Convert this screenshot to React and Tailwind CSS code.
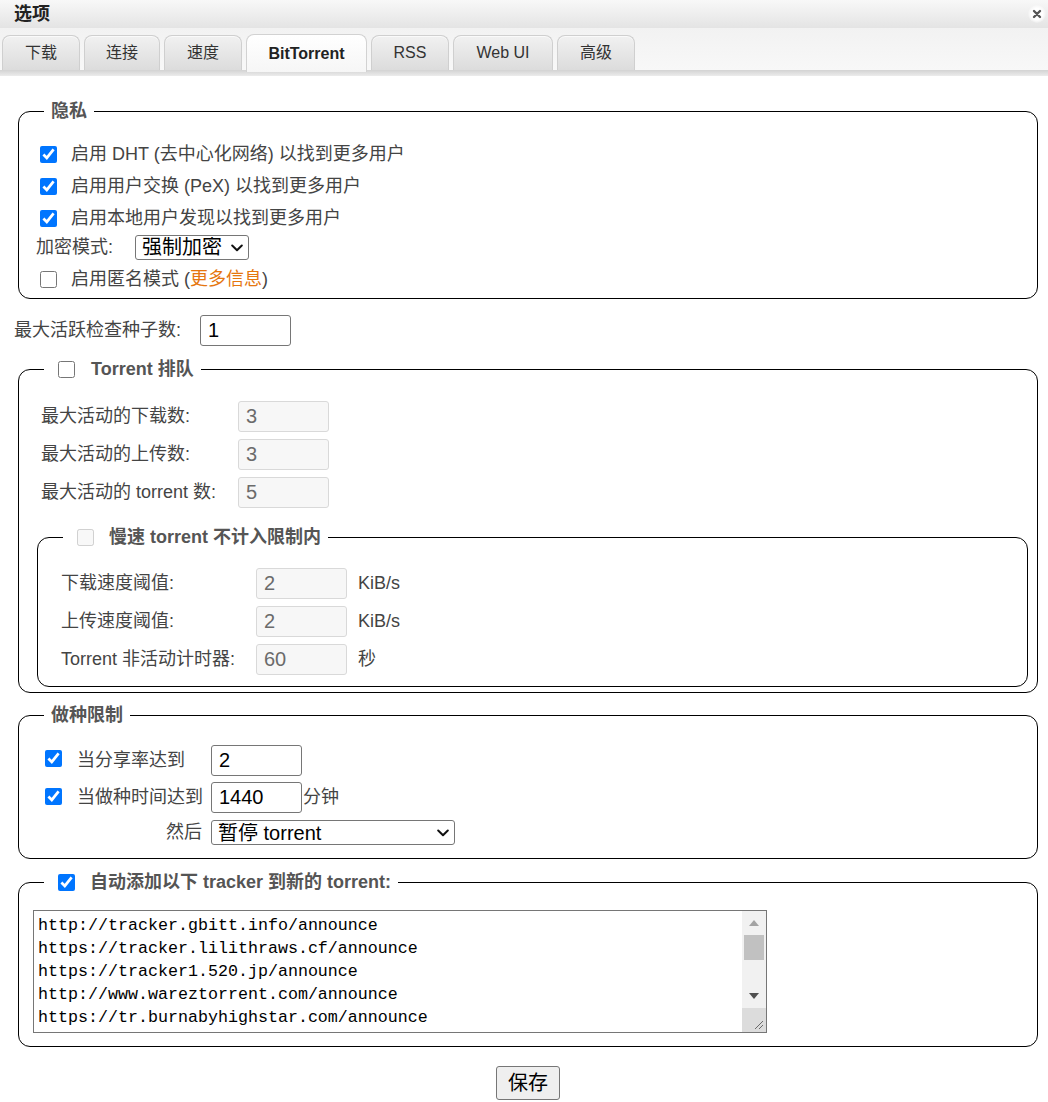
import React from "react";

function Check({ checked = false, disabled = false, className = "" }) {
  return (
    <input
      type="checkbox"
      defaultChecked={checked}
      disabled={disabled}
      className={"w-[17px] h-[17px] m-0 shrink-0 " + className}
    />
  );
}

function NumInput({ value, disabled = false, className = "" }) {
  const look = disabled
    ? "border border-[#d9d9d9] bg-[#f7f7f7] text-[#6b6b6b]"
    : "border border-[#767676] bg-white text-black";
  return (
    <input
      type="text"
      defaultValue={value}
      disabled={disabled}
      className={"h-[31px] w-[91px] rounded-[3px] pl-[7px] text-[20px] outline-none " + look + " " + className}
    />
  );
}

function Chevron() {
  return (
    <svg width="12" height="8" viewBox="0 0 12 8" className="pointer-events-none absolute right-[6px] top-[9px]">
      <path d="M1.2 1.5 L6 6.2 L10.8 1.5" fill="none" stroke="#111" strokeWidth="2" strokeLinecap="round" strokeLinejoin="round" />
    </svg>
  );
}

function Select({ value, className = "" }) {
  return (
    <span className={"relative inline-block h-[25px] " + className}>
      <select className="h-[25px] w-full appearance-none rounded-[3px] border border-[#767676] bg-white pl-[6px] text-[20px] leading-[20px] text-black outline-none">
        <option>{value}</option>
      </select>
      <Chevron />
    </span>
  );
}

function Legend({ children }) {
  return (
    <legend className="ml-[11px] px-[7px]">
      <span className="flex h-[24px] items-center text-[18px] font-bold text-[#555]">{children}</span>
    </legend>
  );
}

const TRACKERS = [
  "http://tracker.gbitt.info/announce",
  "https://tracker.lilithraws.cf/announce",
  "https://tracker1.520.jp/announce",
  "http://www.wareztorrent.com/announce",
  "https://tr.burnabyhighstar.com/announce",
];

const TABS = [
  { label: "下载", w: "w-[78px]" },
  { label: "连接", w: "w-[76px]" },
  { label: "速度", w: "w-[78px]" },
  { label: "BitTorrent", w: "w-[121px]", active: true },
  { label: "RSS", w: "w-[78px]" },
  { label: "Web UI", w: "w-[100px]" },
  { label: "高级", w: "w-[78px]" },
];

export default function App() {
  return (
    <div className="min-h-[1102px] w-[1048px] bg-white font-['Liberation_Sans','Noto_Sans_CJK_SC',sans-serif] text-[18px] text-[#444]">
      {/* Title bar */}
      <div className="flex h-[28px] items-center justify-between bg-gradient-to-b from-[#f8f8f8] to-[#e4e4e4] pl-[14px] pr-[2px]">
        <span className="text-[18px] font-bold text-[#222]">选项</span>
        <span className="flex h-[18px] w-[18px] items-center justify-center rounded-full bg-[radial-gradient(circle,#ffffff_45%,rgba(255,255,255,0)_75%)]">
          <svg width="10" height="10" viewBox="0 0 10 10">
            <path d="M2 2 L8 8 M8 2 L2 8" stroke="#555" strokeWidth="2.4" strokeLinecap="round" />
          </svg>
        </span>
      </div>

      {/* Tabs */}
      <div className="flex h-[42px] items-end gap-[4px] bg-gradient-to-b from-[#f2f2f2] to-[#f8f8f8] pl-[2px]">
        {TABS.map((t) =>
          t.active ? (
            <div
              key={t.label}
              className={"relative z-10 -mb-[2px] flex h-[38px] items-center justify-center rounded-t-[8px] border border-b-0 border-[#d2d2d2] bg-gradient-to-b from-[#ffffff] to-[#f6f6f6] text-[16px] font-bold text-[#222] " + t.w}
            >
              {t.label}
            </div>
          ) : (
            <div
              key={t.label}
              className={"flex h-[35px] items-center justify-center rounded-t-[8px] border border-b-0 border-[#cfcfcf] bg-gradient-to-b from-[#f1f1f1] to-[#dcdcdc] text-[16px] text-[#333] shadow-[inset_0_1px_0_#fafafa] " + t.w}
            >
              {t.label}
            </div>
          )
        )}
      </div>
      <div className="h-[6px] bg-gradient-to-b from-[#d3d3d3] to-[#ececec]" />

      {/* Content */}
      <div className="pl-[14px] pr-[10px] pt-[23px]">
        {/* 隐私 */}
        <fieldset className="ml-[4px] min-w-0 rounded-[12px] border border-black pl-[14px] pr-[9px]">
          <Legend>隐私</Legend>
          <div className="pb-[3px] pt-[15px]">
            <label className="flex h-[32px] items-center">
              <Check checked className="ml-[7px]" />
              <span className="ml-[14px]">启用 DHT (去中心化网络) 以找到更多用户</span>
            </label>
            <label className="flex h-[32px] items-center">
              <Check checked className="ml-[7px]" />
              <span className="ml-[14px]">启用用户交换 (PeX) 以找到更多用户</span>
            </label>
            <label className="flex h-[32px] items-center">
              <Check checked className="ml-[7px]" />
              <span className="ml-[14px]">启用本地用户发现以找到更多用户</span>
            </label>
            <div className="flex h-[26px] items-center">
              <span className="ml-[3px]">加密模式:</span>
              <Select value="强制加密" className="ml-[22px] w-[114px]" />
            </div>
            <label className="mt-[3px] flex h-[32px] items-center">
              <Check className="ml-[7px]" />
              <span className="ml-[14px]">
                启用匿名模式 (<span className="text-[#e5760f]">更多信息</span>)
              </span>
            </label>
          </div>
        </fieldset>

        {/* 最大活跃检查种子数 */}
        <div className="mt-[16px] flex h-[31px] items-center">
          <span className="w-[186px]">最大活跃检查种子数:</span>
          <NumInput value="1" />
        </div>

        {/* Torrent 排队 */}
        <fieldset className="ml-[4px] mt-[11px] min-w-0 rounded-[12px] border border-black pl-[14px] pr-[9px]">
          <Legend>
            <Check className="ml-[7px]" />
            <span className="ml-[16px]">Torrent 排队</span>
          </Legend>
          <div className="pb-[5px] pt-[20px]">
            <div className="flex flex-col gap-[7px]">
              <div className="flex h-[31px] items-center">
                <span className="ml-[8px] w-[197px]">最大活动的下载数:</span>
                <NumInput value="3" disabled />
              </div>
              <div className="flex h-[31px] items-center">
                <span className="ml-[8px] w-[197px]">最大活动的上传数:</span>
                <NumInput value="3" disabled />
              </div>
              <div className="flex h-[31px] items-center">
                <span className="ml-[8px] w-[197px]">最大活动的 torrent 数:</span>
                <NumInput value="5" disabled />
              </div>
            </div>

            <fieldset className="ml-[4px] mt-[17px] min-w-0 rounded-[12px] border border-black pl-[14px] pr-[9px]">
              <Legend>
                <Check disabled className="ml-[7px]" />
                <span className="ml-[15px]">慢速 torrent 不计入限制内</span>
              </Legend>
              <div className="flex flex-col gap-[7px] pb-[11px] pt-[19px]">
                <div className="flex h-[31px] items-center">
                  <span className="ml-[9px] w-[195px]">下载速度阈值:</span>
                  <NumInput value="2" disabled />
                  <span className="ml-[11px]">KiB/s</span>
                </div>
                <div className="flex h-[31px] items-center">
                  <span className="ml-[9px] w-[195px]">上传速度阈值:</span>
                  <NumInput value="2" disabled />
                  <span className="ml-[11px]">KiB/s</span>
                </div>
                <div className="flex h-[31px] items-center">
                  <span className="ml-[9px] w-[195px]">Torrent 非活动计时器:</span>
                  <NumInput value="60" disabled />
                  <span className="ml-[11px]">秒</span>
                </div>
              </div>
            </fieldset>
          </div>
        </fieldset>

        {/* 做种限制 */}
        <fieldset className="ml-[4px] mt-[10px] min-w-0 rounded-[12px] border border-black pl-[14px] pr-[9px]">
          <Legend>做种限制</Legend>
          <div className="pb-[13px] pt-[18px]">
            <div className="flex h-[31px] items-center">
              <span className="flex w-[44px] items-center">
                <Check checked className="mb-[4px] ml-[12px]" />
              </span>
              <span className="w-[134px]">当分享率达到</span>
              <NumInput value="2" />
            </div>
            <div className="mt-[6px] flex h-[31px] items-center">
              <span className="flex w-[44px] items-center">
                <Check checked className="mb-[2px] ml-[12px]" />
              </span>
              <span className="w-[134px]">当做种时间达到</span>
              <NumInput value="1440" />
              <span className="ml-[1px]">分钟</span>
            </div>
            <div className="mt-[7px] flex h-[25px] items-center">
              <span className="w-[178px] pr-[9px] text-right">然后</span>
              <Select value="暂停 torrent" className="w-[244px]" />
            </div>
          </div>
        </fieldset>

        {/* Trackers */}
        <fieldset className="ml-[4px] mt-[11px] min-w-0 rounded-[12px] border border-black pl-[14px] pr-[9px]">
          <Legend>
            <Check checked className="ml-[7px]" />
            <span className="ml-[15px]">自动添加以下 tracker 到新的 torrent:</span>
          </Legend>
          <div className="pb-[13px] pt-[16px]">
            <div className="flex h-[123px] w-[734px] border border-[#767676] bg-white">
              <div className="min-w-0 flex-1 overflow-hidden whitespace-pre pl-[4px] pt-[3px] font-['Liberation_Mono',monospace] text-[16.67px] leading-[23px] text-black">
                {TRACKERS.map((l) => (
                  <div key={l}>{l}</div>
                ))}
              </div>
              <div className="flex w-[24px] flex-col bg-[#f1f1f1]">
                <div className="flex h-[24px] items-center justify-center">
                  <svg width="10" height="6" viewBox="0 0 10 6">
                    <path d="M0 6 L5 0 L10 6 Z" fill="#a3a3a3" />
                  </svg>
                </div>
                <div className="mx-[2px] h-[25px] bg-[#c1c1c1]" />
                <div className="flex-1" />
                <div className="flex h-[25px] items-center justify-center">
                  <svg width="10" height="6" viewBox="0 0 10 6">
                    <path d="M0 0 L10 0 L5 6 Z" fill="#505050" />
                  </svg>
                </div>
                <div className="flex h-[24px] items-end justify-end bg-[#dcdcdc] pb-[2px] pr-[2px]">
                  <svg width="11" height="11" viewBox="0 0 11 11">
                    <path d="M10 2 L2 10 M10 6 L6 10" stroke="#6a6a6a" strokeWidth="1" />
                  </svg>
                </div>
              </div>
            </div>
          </div>
        </fieldset>

        {/* Save */}
        <div className="mt-[19px] flex justify-center pl-[4px]">
          <button className="h-[34px] w-[64px] rounded-[3px] border border-[#767676] bg-[#efefef] text-[20px] text-black">
            保存
          </button>
        </div>
      </div>
    </div>
  );
}
